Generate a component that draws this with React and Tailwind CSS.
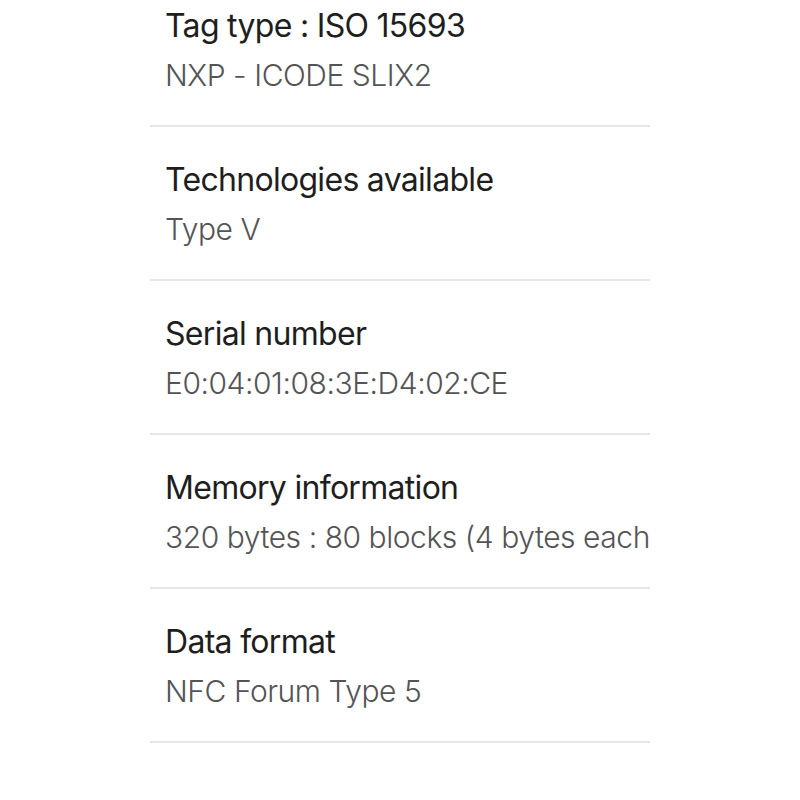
import React from 'react';

const rows = [
  { label: 'Tag type : ISO 15693', value: 'NXP - ICODE SLIX2' },
  { label: 'Technologies available', value: 'Type V' },
  { label: 'Serial number', value: 'E0:04:01:08:3E:D4:02:CE' },
  { label: 'Memory information', value: '320 bytes : 80 blocks (4 bytes each)' },
  { label: 'Data format', value: 'NFC Forum Type 5' },
];

const App = () => {
  return (
    <div className="min-h-screen bg-white overflow-hidden" style={{ fontFamily: 'Inter, "Noto Sans", sans-serif' }}>
      <div className="w-[500px] mx-auto mt-[-27px]">
        {rows.map((row) => (
          <div key={row.label} className="border-b-2 border-[#e6e6e6] pl-[15px] pt-[33px] pb-[30px] overflow-hidden whitespace-nowrap">
            <div className="text-[32px] leading-[40px] tracking-[-0.7px] text-[#1e1e20]">{row.label}</div>
            <div className="mt-[9px] text-[30px] leading-[40px] tracking-[-0.45px] font-light text-[#545456]">{row.value}</div>
          </div>
        ))}
      </div>
    </div>
  );
};

export default App;
